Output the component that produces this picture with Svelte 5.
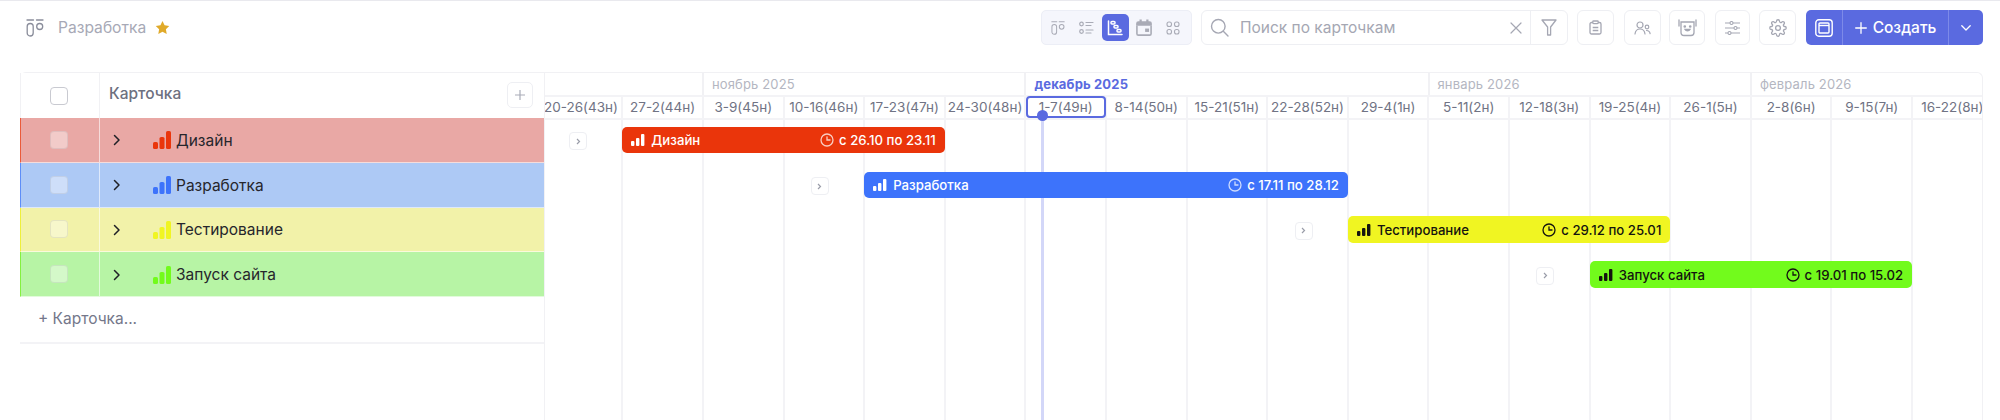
<script>
  const weeks = ['20-26(43н)','27-2(44н)','3-9(45н)','10-16(46н)','17-23(47н)','24-30(48н)','1-7(49н)','8-14(50н)','15-21(51н)','22-28(52н)','29-4(1н)','5-11(2н)','12-18(3н)','19-25(4н)','26-1(5н)','2-8(6н)','9-15(7н)','16-22(8н)'];
  const months = [
    { name: '', span: 2 },
    { name: 'ноябрь 2025', span: 4 },
    { name: 'декабрь 2025', span: 5, now: true },
    { name: 'январь 2026', span: 4 },
    { name: 'февраль 2026', span: 3 }
  ];
  const cards = [
    { name: 'Дизайн', dates: 'с 26.10 по 23.11', cls: 'red', start: 1, dark: false },
    { name: 'Разработка', dates: 'с 17.11 по 28.12', cls: 'blue', start: 4, span: 6, dark: false },
    { name: 'Тестирование', dates: 'с 29.12 по 25.01', cls: 'yellow', start: 10, dark: true },
    { name: 'Запуск сайта', dates: 'с 19.01 по 15.02', cls: 'green', start: 13, dark: true }
  ];
  const W = 80.62;
</script>

{#snippet bars(cls)}
  <svg class="bars {cls}" width="18" height="18" viewBox="0 0 18 18"><rect x="0" y="11" width="5" height="7" rx="1.600"/><rect x="6.500" y="6" width="5" height="12" rx="1.600"/><rect x="13" y="0" width="5" height="18" rx="1.600"/></svg>
{/snippet}

{#snippet kanban(size)}
  <svg width={size} height={size} viewBox="0 0 18 18" fill="none" stroke="currentColor" stroke-width="1.3" stroke-linecap="round"><path d="M1 1h6.500M10.500 1H17"/><rect x="1.200" y="4.500" width="6" height="12.500" rx="3"/><circle cx="13.700" cy="7.500" r="3"/></svg>
{/snippet}

<div class="page">
  <header class="top">
    <div class="title">
      <span class="tico">{@render kanban(18)}</span>
      <span class="tname">Разработка</span>
      <svg class="star" width="15" height="15" viewBox="0 0 16 16"><path d="M8 1l2.200 4.600 5 .7-3.600 3.500.9 5L8 12.400l-4.500 2.400.9-5L.8 6.300l5-.7z" fill="#e0aa2a"/></svg>
    </div>
    <div class="tools">
      <div class="views">
        <span class="v">{@render kanban(14)}</span>
        <span class="v"><svg width="15" height="14" viewBox="0 0 15 14" fill="none" stroke="currentColor" stroke-width="1.200" stroke-linecap="round"><circle cx="2.500" cy="3" r="1.800"/><circle cx="2.500" cy="10.500" r="1.800"/><path d="M7 1.500h7M7 4.500h5M7 9h7M7 12h5"/></svg></span>
        <span class="v on"><svg width="16" height="16" viewBox="0 0 16 16" fill="none" stroke="#fff" stroke-width="1.500" stroke-linecap="round"><path d="M1.500 1v13.500H15"/><rect x="4" y="1.500" width="4" height="2.500" rx="1"/><rect x="7" y="5.500" width="4" height="2.500" rx="1"/><rect x="10" y="9.500" width="4" height="2.500" rx="1"/></svg></span>
        <span class="v"><svg width="18" height="18" viewBox="0 0 16 16"><path d="M1 4a2 2 0 0 1 2-2h1V.5h2V2h4V.5h2V2h1a2 2 0 0 1 2 2v2H1z" fill="currentColor"/><path d="M1.700 6v7a1.300 1.300 0 0 0 1.300 1.300h10a1.300 1.300 0 0 0 1.300-1.300V6" fill="none" stroke="currentColor" stroke-width="1.400"/><rect x="9" y="8.500" width="3.500" height="3" fill="currentColor"/></svg></span>
        <span class="v"><svg width="14" height="14" viewBox="0 0 14 14" fill="none" stroke="currentColor" stroke-width="1.100"><rect x="1" y="1" width="4.500" height="4.500" rx="2"/><rect x="8.500" y="1" width="4.500" height="4.500" rx="2"/><rect x="1" y="8.500" width="4.500" height="4.500" rx="2"/><rect x="8.500" y="8.500" width="4.500" height="4.500" rx="2"/></svg></span>
      </div>
      <div class="search">
        <svg class="lens" width="19" height="19" viewBox="0 0 19 19" fill="none" stroke="currentColor" stroke-width="1.400" stroke-linecap="round"><circle cx="8.300" cy="8.300" r="6.800"/><path d="M13.300 13.300l4.700 4.700"/></svg>
        <span class="ph">Поиск по карточкам</span>
        <svg class="x" width="12" height="12" viewBox="0 0 12 12" fill="none" stroke="currentColor" stroke-width="1.200" stroke-linecap="round"><path d="M1 1l10 10M11 1L1 11"/></svg>
        <span class="filter"><svg width="16" height="17" viewBox="0 0 16 17" fill="none" stroke="currentColor" stroke-width="1.300" stroke-linejoin="round"><path d="M1 1h14L9.600 8v8h-3V8z"/></svg></span>
      </div>
      <span class="btn b1"><svg width="13" height="15" viewBox="0 0 13 15" fill="none" stroke="currentColor" stroke-width="1.300"><rect x="1" y="2.500" width="11" height="11.500" rx="1.500"/><rect x="3.800" y="1" width="5.400" height="2.600" rx=".8" fill="#fff"/><path d="M3.700 7.500h5.600M3.700 10.500h5.600"/></svg></span>
      <span class="btn b2"><svg width="17" height="14" viewBox="0 0 17 14" fill="none" stroke="currentColor" stroke-width="1.200" stroke-linecap="round"><circle cx="6" cy="4" r="3"/><path d="M1 13c.4-3.200 2.300-5 5-5s4.600 1.800 5 5"/><circle cx="13" cy="6" r="1.800"/><path d="M12.500 9.500c2 0 3.300 1.300 3.600 3.200"/></svg></span>
      <span class="btn b3"><svg width="19" height="18" viewBox="0 0 19 18" fill="none" stroke="currentColor" stroke-width="1.300" stroke-linecap="round"><path d="M1 1v6M18 1v6"/><path d="M3 3h13v10.500a3 3 0 0 1-3 3H6a3 3 0 0 1-3-3z"/><path d="M7 10.500c1 1.800 4 1.800 5 0z" fill="currentColor"/><circle cx="6.800" cy="7.500" r=".7"/><circle cx="12.200" cy="7.500" r=".7"/></svg></span>
      <span class="btn b4"><svg width="15" height="14" viewBox="0 0 15 14" fill="none" stroke="currentColor" stroke-width="1.100"><path d="M0 2h5M8 2h7M0 7h9M12 7h3M0 12h3M6 12h9"/><circle cx="6.500" cy="2" r="1.500"/><circle cx="10.500" cy="7" r="1.500"/><circle cx="4.500" cy="12" r="1.500"/></svg></span>
      <span class="btn b5"><svg width="18" height="18" viewBox="0 0 24 24" fill="none" stroke="currentColor" stroke-width="1.700" stroke-linejoin="round"><circle cx="12" cy="12" r="3.200"/><path d="M19.400 15a1.700 1.700 0 0 0 .3 1.800l.1.100a2 2 0 1 1-2.800 2.800l-.1-.1a1.700 1.700 0 0 0-2.900 1.200V21a2 2 0 0 1-4 0v-.1a1.700 1.700 0 0 0-2.900-1.200l-.1.100a2 2 0 1 1-2.800-2.800l.1-.1a1.700 1.700 0 0 0-1.200-2.900H3a2 2 0 0 1 0-4h.1a1.700 1.700 0 0 0 1.200-2.900l-.1-.1a2 2 0 1 1 2.800-2.800l.1.100a1.700 1.700 0 0 0 2.900-1.200V3a2 2 0 0 1 4 0v.1a1.700 1.700 0 0 0 2.900 1.200l.1-.1a2 2 0 1 1 2.800 2.800l-.1.100a1.700 1.700 0 0 0 1.200 2.900h.1a2 2 0 0 1 0 4h-.1a1.700 1.700 0 0 0-1.500 1z"/></svg></span>
      <div class="create">
        <span class="c-a"><svg width="18" height="18" viewBox="0 0 18 18" fill="none" stroke="#fff" stroke-width="1.400"><rect x=".8" y=".8" width="16.400" height="16.400" rx="3"/><rect x="4" y="4" width="10" height="10" rx="1"/><path d="M4 6.500h10"/></svg></span>
        <span class="c-b"><svg width="12" height="12" viewBox="0 0 12 12" stroke="#fff" stroke-width="1.300" stroke-linecap="round"><path d="M6 .7v10.600M.7 6h10.600"/></svg>Создать</span>
        <span class="c-c"><svg width="10" height="6" viewBox="0 0 10 6" fill="none" stroke="#fff" stroke-width="1.300" stroke-linecap="round" stroke-linejoin="round"><path d="M.8.8L5 5l4.200-4.200"/></svg></span>
      </div>
    </div>
  </header>

  <main class="board">
    <section class="left">
      <div class="lhead">
        <div class="chk"><span class="box"></span></div>
        <div class="lh-t">Карточка</div>
        <span class="plus"><svg width="12" height="12" viewBox="0 0 12 12" stroke="#a9acb8" stroke-width="1.200"><path d="M6 1v10M1 6h10"/></svg></span>
      </div>
      {#each cards as c}
        <div class="row {c.cls}">
          <div class="chk"><span class="box soft"></span></div>
          <div class="cell">
            <svg class="arrow" width="8" height="12" viewBox="0 0 8 12" fill="none" stroke="#1f2026" stroke-width="1.500" stroke-linecap="round" stroke-linejoin="round"><path d="M1.500 1.500L6 6l-4.500 4.500"/></svg>
            {@render bars(c.cls)}
            <span class="rname">{c.name}</span>
          </div>
        </div>
      {/each}
      <div class="add">+ Карточка...</div>
    </section>

    <section class="chart">
      <div class="inner">
        <div class="months">
          {#each months as m}
            <div class="month" class:now={m.now} style="width:{m.span * W}px">{m.name}</div>
          {/each}
        </div>
        <div class="weeks">
          {#each weeks as w}
            <div class="week">{w}</div>
          {/each}
        </div>
        <div class="grid">
          {#each weeks as w}
            <div class="col"></div>
          {/each}
        </div>
        <div class="today-box"></div>
        <div class="today-line"></div>
        <div class="today-dot"></div>
        {#each cards as c, i}
          <div class="gbar {c.cls}" class:dark={c.dark} style="left:{c.start * W}px;width:{(c.span ?? 4) * W}px;top:{53.8 + i * 44.8}px">
            <span class="gl">
              <svg width="14" height="14" viewBox="0 0 14 14" fill="currentColor"><rect x="0" y="8" width="3.400" height="5" rx="1"/><rect x="5" y="5" width="3.400" height="8" rx="1"/><rect x="10" y="1" width="3.400" height="12" rx="1"/></svg>
              {c.name}
            </span>
            <span class="gr">
              <svg class="clock" width="14" height="14" viewBox="0 0 14 14" fill="none" stroke="currentColor" stroke-width="1.300" stroke-linecap="round"><circle cx="7" cy="7" r="6"/><path d="M7 3.800V7h3"/></svg>
              {c.dates}
            </span>
          </div>
          <span class="exp" style="left:{(c.start * W) - 53.300}px;top:{59.3 + i * 44.8}px"><svg width="5" height="7" viewBox="0 0 5 7" fill="none" stroke="#9a9da9" stroke-width="1.200"><path d="M1 1l2.500 2.500L1 6"/></svg></span>
        {/each}
      </div>
    </section>
  </main>
</div>

<style>
  :global(body) { margin: 0; background: #fff; }
  .page { width: 2000px; height: 420px; overflow: hidden; border-top: 1px solid #e9e9ee; box-sizing: border-box; font-family: Inter, "Noto Sans", sans-serif; color: #1f2026; }

  .top { height: 71px; display: flex; justify-content: space-between; box-sizing: border-box; padding: 9px 17px 0 26px; }
  .title { display: flex; align-items: center; height: 35px; }
  .tico { display: flex; color: #8a8d9b; margin-right: 14px; }
  .tname { font-size: 15.600px; color: #a7a9b6; }
  .star { margin-left: 9px; }
  .tools { display: flex; align-items: flex-start; }
  .views { box-sizing: border-box; width: 151px; height: 35px; display: flex; align-items: center; background: #f5f6fc; border: 1px solid #eceef6; border-radius: 5px; padding: 0 3px; margin-right: 9px; }
  .v { width: 27px; height: 27px; margin-right: 2px; display: flex; align-items: center; justify-content: center; color: #a9abb6; border-radius: 5px; }
  .v.on { background: #5a6ae0; }
  .search { box-sizing: border-box; width: 367px; height: 35px; border: 1px solid #eeeff3; border-radius: 6px; display: flex; align-items: center; padding-left: 8px; margin-right: 9px; color: #a5a7b3; }
  .ph { font-size: 15.500px; margin-left: 11px; flex: 1; }
  .x { margin-right: 8px; }
  .filter { width: 36px; height: 33px; border-left: 1px solid #eeeff3; display: flex; align-items: center; justify-content: center; }
  .btn { box-sizing: border-box; height: 35px; border: 1px solid #eeeff3; border-radius: 6px; display: flex; align-items: center; justify-content: center; color: #a5a7b3; }
  .b1 { width: 37px; margin-right: 10px; }
  .b2 { width: 37px; margin-right: 8px; }
  .b3 { width: 36px; margin-right: 10px; }
  .b4 { width: 35px; margin-right: 9px; }
  .b5 { width: 37px; margin-right: 10px; }
  .create { display: flex; height: 35px; width: 177px; background: #5a6ae0; border-radius: 5px; color: #fff; font-size: 15.500px; font-weight: 500; }
  .create > span { display: flex; align-items: center; justify-content: center; }
  .c-a { width: 36px; border-right: 1px solid #7d8ae8; }
  .c-b { width: 105px; gap: 6px; border-right: 1px solid #7d8ae8; }
  .c-c { flex: 1; }

  .board { margin-left: 20px; width: 1963px; height: 348px; display: flex; border: 1px solid #f1f1f4; border-bottom: 0; border-radius: 6px 6px 0 0; box-sizing: border-box; border-left-width: 0; }
  .left { width: 525px; flex: none; border-right: 1px solid #f1f1f4; position: relative; z-index: 2; background: #fff; box-sizing: border-box; }
  .lhead { display: flex; height: 45px; position: relative; border-left: 1px solid #f1f1f4; }
  .chk { width: 76px; padding-right: 2px; flex: none; display: flex; align-items: center; justify-content: center; border-right: 1px solid #f1f1f4; box-sizing: content-box; }
  .box { box-sizing: border-box; width: 18px; height: 18px; border: 1px solid #c9cad1; border-radius: 4px; background: #fff; }
  .box.soft { background: rgba(255,255,255,.4); border-color: rgba(120,120,130,.15); }
  .lh-t { font-size: 15.500px; font-weight: 500; color: #6d7080; padding-left: 9px; line-height: 41px; }
  .plus { position: absolute; right: 11px; top: 9px; width: 26px; height: 26px; box-sizing: border-box; border: 1px solid #eeeff3; border-radius: 5px; display: flex; align-items: center; justify-content: center; }
  .row { display: flex; height: 44.750px; box-sizing: border-box; border-bottom: 1px solid rgba(255,255,255,.6); border-left: 1px solid; }
  .row .chk { border-right-color: rgba(255,255,255,.6); }
  .row.red { background: #e9a8a5; border-left-color: #ea5a3a; }
  .row.blue { background: #adc9f5; border-left-color: #5d8df8; }
  .row.yellow { background: #f2f2a9; border-left-color: #eef03a; }
  .row.green { background: #b7f4a5; border-left-color: #84f040; }
  .cell { display: flex; align-items: center; font-size: 15.500px; padding: 1px 0 0 13px; color: #26262c; }
  .arrow { margin-right: 32px; }
  .bars { margin-right: 5px; }
  .bars.red { fill: #ea350b; } .bars.blue { fill: #3d73fb; } .bars.yellow { fill: #f0f522; } .bars.green { fill: #72fb1c; }
  .add { height: 47px; line-height: 43px; box-sizing: border-box; border-bottom: 2px solid #f3f3f6; padding-left: 18px; font-size: 15.500px; color: #74778a; }

  .chart { flex: 1; overflow: hidden; position: relative; min-width: 0; }
  .inner { position: relative; width: 1451px; margin-left: -3.300px; height: 100%; }
  .months { display: flex; height: 22px; }
  .month { box-sizing: border-box; flex: none; font-size: 13px; letter-spacing: .15px; color: #b4b6c1; padding-left: 8px; line-height: 22px; border-left: 2px solid #f1f1f4; margin-left: -1px; margin-right: 1px; }
  .month:first-child { border-left: 0; }
  .month.now { color: #5a6ae0; font-weight: 700; }
  .weeks { display: flex; height: 21px; border-top: 2px solid #f3f3f6; border-bottom: 2px solid #f3f3f6; box-sizing: content-box; }
  .week { flex: none; width: 80.620px; box-sizing: border-box; text-align: center; font-size: 13.500px; line-height: 21px; color: #707384; border-left: 2px solid #f3f3f6; white-space: nowrap; transform: translateX(-1px); }
  .week:first-child { border-left: 0; }
  .grid { display: flex; position: absolute; top: 47px; left: 0; bottom: 0; }
  .col { flex: none; width: 80.620px; box-sizing: border-box; border-left: 2px solid #f3f3f6; transform: translateX(-1px); }
  .col:first-child { border-left: 0; }
  .today-box { position: absolute; left: 484.600px; top: 23px; width: 80px; height: 22px; box-sizing: border-box; border: 2px solid #5a6ae0; border-radius: 4px; }
  .today-line { position: absolute; left: 499px; top: 44px; bottom: 0; width: 3.500px; background: #d3d7f8; }
  .today-dot { position: absolute; left: 495.300px; top: 37.200px; width: 11px; height: 11px; border-radius: 50%; background: #5a6ae0; }
  .gbar { position: absolute; height: 26.700px; box-sizing: border-box; border-radius: 5px; display: flex; justify-content: space-between; align-items: center; padding: 0 9px; font-size: 13.200px; font-weight: 500; color: #fff; white-space: nowrap; }
  .gbar.dark { color: #14140f; }
  .gbar.red { background: #ea350b; } .gbar.blue { background: #3d73fb; } .gbar.yellow { background: #f0f522; } .gbar.green { background: #72fb1c; }
  .gl { display: flex; align-items: center; gap: 6px; }
  .gr { display: flex; align-items: center; gap: 5px; }
  .gbar:not(.dark) .clock { opacity: .75; }
  .exp { position: absolute; width: 18px; height: 18px; box-sizing: border-box; background: #fff; border: 1px solid #eeeff3; border-radius: 4px; display: flex; align-items: center; justify-content: center; }
</style>
